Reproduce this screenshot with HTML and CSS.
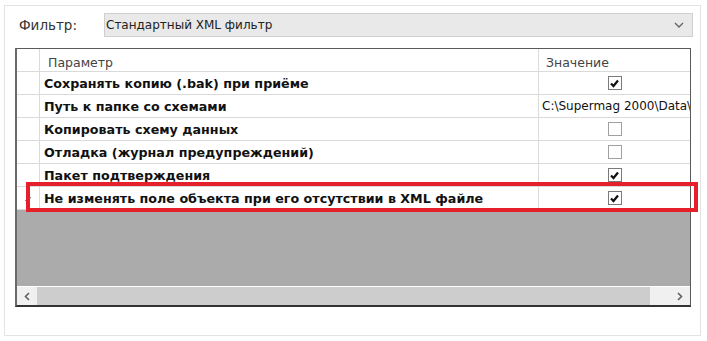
FILE: index.html
```html
<!DOCTYPE html>
<html lang="ru">
<head>
  <meta charset="UTF-8" />
  <title>Фильтр</title>
  <link rel="stylesheet" href="styles.css">
</head>
<body>
  <div class="panel">
    <div class="filter-row">
      <span class="filter-label">Фильтр:</span>
      <div class="combo">
        <span>Стандартный XML фильтр</span>
        <svg class="combo-arrow" width="10" height="6" viewBox="0 0 10 6"><path d="M1 1 L5 5 L9 1" fill="none" stroke="#666" stroke-width="1.4"/></svg>
      </div>
    </div>

    <div class="grid-wrap">
      <div class="grid">
        <div class="row head">
          <div class="rh"></div>
          <div class="cell param">Параметр</div>
          <div class="cell value">Значение</div>
        </div>
        <div class="row">
          <div class="rh"></div>
          <div class="cell param">Сохранять копию (.bak) при приёме</div>
          <div class="cell value center"><span class="chk on"><svg width="11" height="11" viewBox="0 0 11 11"><path d="M2 5.5 L4.5 8 L9 2.5" fill="none" stroke="#111" stroke-width="2.2"/></svg></span></div>
        </div>
        <div class="row">
          <div class="rh"></div>
          <div class="cell param">Путь к папке со схемами</div>
          <div class="cell value path">C:\Supermag 2000\Data\</div>
        </div>
        <div class="row">
          <div class="rh"></div>
          <div class="cell param">Копировать схему данных</div>
          <div class="cell value center"><span class="chk"></span></div>
        </div>
        <div class="row">
          <div class="rh"></div>
          <div class="cell param">Отладка (журнал предупреждений)</div>
          <div class="cell value center"><span class="chk"></span></div>
        </div>
        <div class="row">
          <div class="rh"></div>
          <div class="cell param">Пакет подтверждения</div>
          <div class="cell value center"><span class="chk on"><svg width="11" height="11" viewBox="0 0 11 11"><path d="M2 5.5 L4.5 8 L9 2.5" fill="none" stroke="#111" stroke-width="2.2"/></svg></span></div>
        </div>
        <div class="row">
          <div class="rh"><svg width="8" height="7" viewBox="0 0 8 7"><path d="M1 4 L3 6 L7 1" fill="none" stroke="#888" stroke-width="1"/></svg></div>
          <div class="cell param">Не изменять поле объекта при его отсутствии в XML файле</div>
          <div class="cell value center"><span class="chk on"><svg width="11" height="11" viewBox="0 0 11 11"><path d="M2 5.5 L4.5 8 L9 2.5" fill="none" stroke="#111" stroke-width="2.2"/></svg></span></div>
        </div>
        <div class="empty"></div>
        <div class="hscroll">
          <div class="sb-btn"><svg width="6" height="9" viewBox="0 0 6 9"><path d="M5 1 L1.5 4.5 L5 8" fill="none" stroke="#606060" stroke-width="1.6"/></svg></div>
          <div class="sb-thumb"></div>
          <div class="sb-track"></div>
          <div class="sb-btn"><svg width="6" height="9" viewBox="0 0 6 9"><path d="M1 1 L4.5 4.5 L1 8" fill="none" stroke="#606060" stroke-width="1.6"/></svg></div>
        </div>
      </div>
      <div class="highlight"></div>
    </div>
  </div>
</body>
</html>
```

FILE: styles.css
```css
body {
  margin: 0;
  background: #fff;
  font-family: "DejaVu Sans", Verdana, sans-serif;
  color: #111;
}
.panel {
  margin: 5px 0 0 4px;
  border: 1px solid #e3e3e3;
  padding: 7px 0 0 10px;
  box-sizing: border-box;
  width: 697px;
  height: 331px;
}
.filter-row {
  display: flex;
  align-items: center;
  height: 24px;
}
.filter-label {
  width: 85px;
  padding-left: 4px;
  font-size: 13.5px;
  color: #333;
}
.combo {
  flex: 1;
  margin-right: 7px;
  height: 24px;
  box-sizing: border-box;
  border: 1px solid #cfcfcf;
  background: #e9e9e9;
  display: flex;
  align-items: center;
  justify-content: space-between;
  padding: 0 8px 0 1px;
  font-size: 12px;
  color: #222;
}
.grid-wrap {
  position: relative;
  margin-top: 11px;
  width: 676px;
}
.grid {
  height: 259px;
  box-sizing: border-box;
  border: 1px solid #5a5a5a;
  border-left: 2px solid #6a6a6a;
  border-bottom: 2px solid #333;
  display: flex;
  flex-direction: column;
  overflow: hidden;
  background: #fff;
}
.row {
  display: flex;
  height: 23px;
  flex: none;
  box-sizing: border-box;
  border-bottom: 1px solid #dadada;
}
.rh {
  width: 23px;
  flex: none;
  border-right: 1px solid #dadada;
  display: flex;
  align-items: center;
  justify-content: center;
  padding-top: 2px;
  box-sizing: border-box;
}
.cell {
  display: flex;
  align-items: center;
  box-sizing: border-box;
  white-space: nowrap;
  overflow: hidden;
  font-size: 12.7px;
  font-weight: bold;
}
.param {
  width: 499px;
  flex: none;
  padding-left: 4px;
  border-right: 1px solid #dadada;
}
.value {
  flex: 1;
  padding-left: 3px;
}
.head .cell {
  font-weight: normal;
  font-size: 12.5px;
  color: #444;
  padding-top: 4px;
}
.head .param { padding-left: 8px; }
.head .value { padding-left: 7px; }
.path {
  font-weight: normal;
  font-size: 12px;
}
.center {
  justify-content: center;
  padding-left: 0;
  padding-right: 0;
}
.chk {
  width: 14px;
  height: 14px;
  box-sizing: border-box;
  border: 1px solid #a0a0a0;
  background: #fff;
  display: flex;
  align-items: center;
  justify-content: center;
}
.chk.on { border-color: #7a7a7a; }
.empty {
  flex: 1;
  background: #ababab;
  border-bottom: 1px solid #fff;
}
.hscroll {
  height: 18px;
  flex: none;
  display: flex;
  background: #f0f0f0;
}
.sb-btn {
  width: 20px;
  display: flex;
  align-items: center;
  justify-content: center;
}
.sb-thumb {
  width: 613px;
  background: #cdcdcd;
}
.sb-track { flex: 1; }
.highlight {
  position: absolute;
  left: 11px;
  top: 134px;
  width: 672px;
  height: 30px;
  box-sizing: border-box;
  border: 4px solid #e5202b;
}
```
